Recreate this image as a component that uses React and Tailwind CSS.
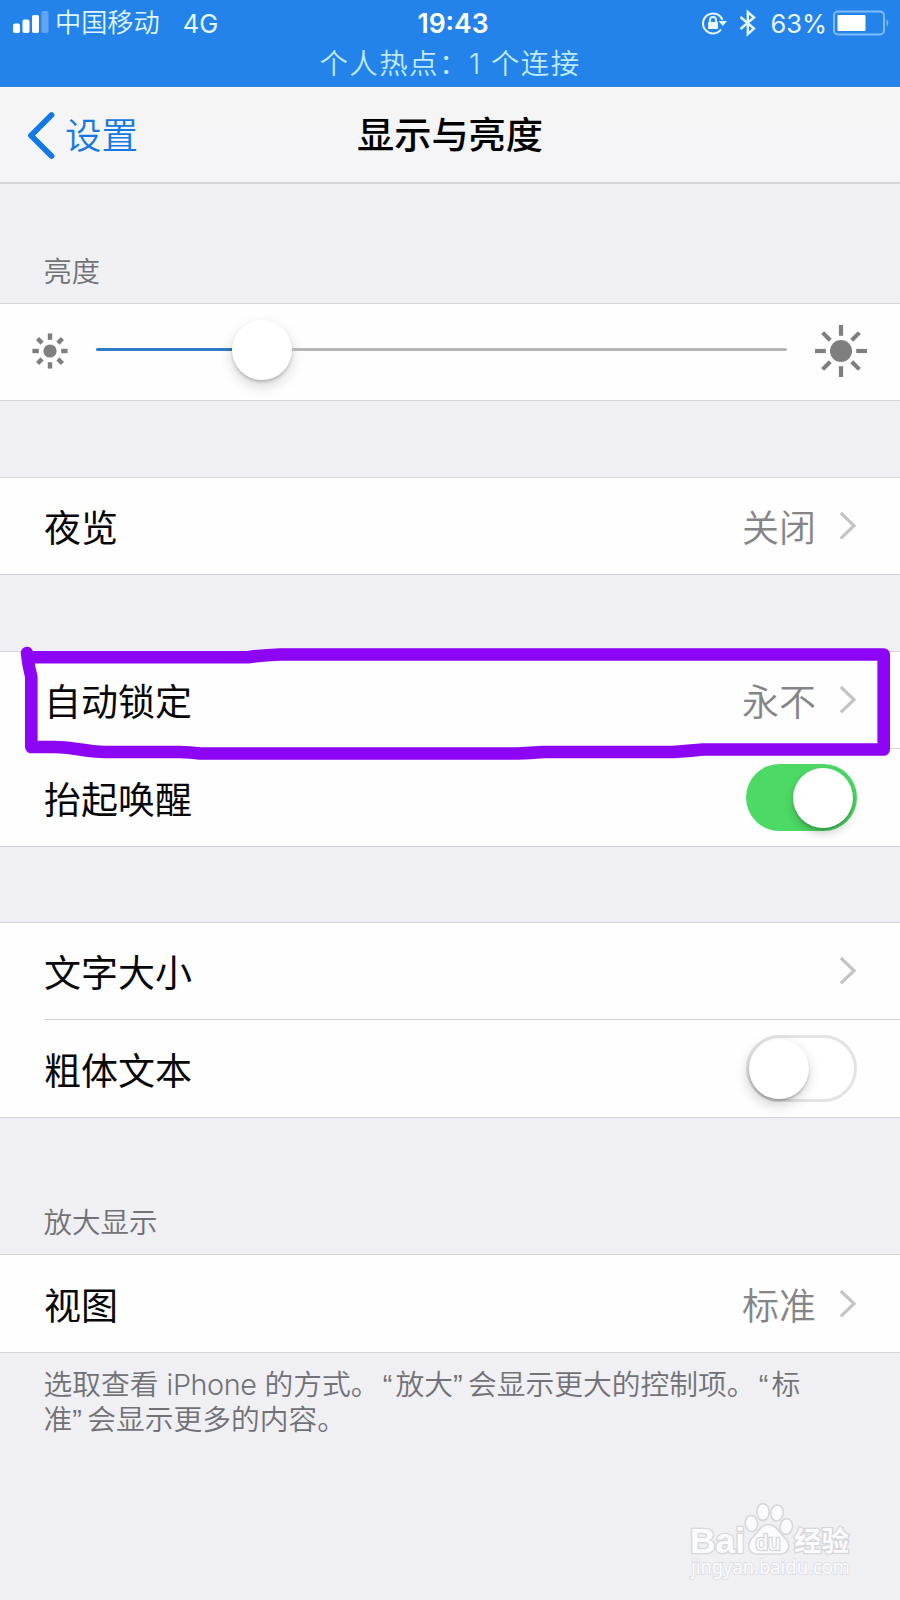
import React from "react";

const RAYS = [0, 45, 90, 135, 180, 225, 270, 315];

function Sun({ size, core, from, to, stroke, className }) {
  const c = size / 2;
  return (
    <svg width={size} height={size} viewBox={`${-c} ${-c} ${size} ${size}`} className={className}>
      <circle r={core} fill="#7f7f7f" />
      {RAYS.map((a) => (
        <line key={a} x1="0" y1={-from} x2="0" y2={-to} stroke="#7f7f7f" strokeWidth={stroke} transform={`rotate(${a})`} />
      ))}
    </svg>
  );
}

function Chevron() {
  return (
    <svg width="18" height="30" viewBox="0 0 18 30" className="ml-[23px] shrink-0">
      <path d="M1.8 2 L15 14.7 L1.8 27.4" fill="none" stroke="#c4c4c7" strokeWidth="3.2" />
    </svg>
  );
}

function Switch({ on }) {
  return on ? (
    <div className="flex h-[67px] w-[111px] items-center justify-end rounded-full bg-[#4cd964] pr-[4px]">
      <div className="size-[60px] rounded-full bg-white shadow-[0_5px_10px_rgba(0,0,0,0.2),0_2px_2px_rgba(0,0,0,0.15)]" />
    </div>
  ) : (
    <div className="flex h-[67px] w-[111px] items-center rounded-full border-[3px] border-[#e3e3e3] bg-white">
      <div className="size-[60px] rounded-full bg-white shadow-[-1px_5px_14px_rgba(0,0,0,0.2),0_2px_2px_rgba(0,0,0,0.2)]" />
    </div>
  );
}

function Row({ label, value, toggle, on, height }) {
  return (
    <div className={`flex items-center pl-[44px] pr-[43px] ${height}`}>
      <span className="flex-1 whitespace-nowrap pt-[5px] text-[37px] leading-none text-[#080808]">{label}</span>
      {toggle ? (
        <Switch on={on} />
      ) : (
        <>
          <span className="whitespace-nowrap pt-[5px] text-[37px] font-[350] leading-none text-[#858588]">{value}</span>
          <Chevron />
        </>
      )}
    </div>
  );
}

function Group({ children }) {
  return <section className="border-y border-[#d5d5d9] bg-[#fefefe]">{children}</section>;
}

function StatusBar() {
  return (
    <header className="h-[87px] border-b border-[#3b8ad8] bg-[#2483ea] text-white">
      <div className="flex h-[45px] items-center pl-[13px] pr-[10px]">
        <div className="flex flex-1 items-center">
          <svg width="36" height="24" viewBox="0 0 36 24">
            <rect x="0" y="13.5" width="7" height="9.5" rx="2" fill="#fff" />
            <rect x="9.5" y="9.5" width="7" height="13.5" rx="2" fill="#fff" />
            <rect x="19" y="5" width="7" height="18" rx="2" fill="#fff" />
            <rect x="28.5" y="1" width="7" height="22" rx="2" fill="#fff" opacity=".28" />
          </svg>
          <span className="ml-[6px] pt-[2px] text-[26.2px] font-[350] leading-none text-[#e0f6ff]">中国移动</span>
          <span className="ml-[23px] pt-[2px] text-[25.5px] leading-none text-[#e6f6ff]">4G</span>
        </div>
        <span className="pl-[3px] pt-[1px] text-[26.5px] font-semibold leading-none">19:43</span>
        <div className="flex flex-1 items-center justify-end">
          <svg width="26" height="26" viewBox="0 0 26 26" fill="none" stroke="#ecf8ff" strokeWidth="2">
            <path d="M20 19.5 A10 10 0 1 1 21.4 10" />
            <path d="M17.5 11 H26 L21.8 16 Z" fill="#ecf8ff" stroke="none" />
            <rect x="7" y="12" width="10" height="7" rx="1" fill="#ecf8ff" stroke="none" />
            <path d="M9 12.5 V10 A3 3 0 0 1 15 10 V12.5" strokeWidth="1.8" />
          </svg>
          <svg width="18" height="28" viewBox="0 0 18 28" className="ml-[12px]" fill="none" stroke="#e6f6ff" strokeWidth="2.4">
            <path d="M1.5 8 L15 19.5 L8.8 25 V3 L15 8.5 L1.5 20" />
          </svg>
          <span className="ml-[13px] pt-[2px] text-[25.5px] leading-none text-[#e6f6ff]">63%</span>
          <svg width="58" height="26" viewBox="0 0 58 26" className="-mr-[1px] ml-[6px]">
            <rect x="1" y="1.5" width="50" height="23" rx="4" fill="none" stroke="#7dbcf8" strokeWidth="2" />
            <rect x="4.5" y="5" width="28" height="16" rx="1" fill="#fff" />
            <path d="M53.5 9 Q57 13 53.5 17 Z" fill="#7dbcf8" />
          </svg>
        </div>
      </div>
      <div className="flex h-[39px] items-center justify-center whitespace-nowrap text-[28.5px] font-[350] leading-none tracking-[1.4px] text-[#bfeaff]">
        个人热点：1 个连接
      </div>
    </header>
  );
}

function NavBar() {
  return (
    <nav className="flex h-[97px] items-center border-b-2 border-[#d5d5dc] bg-linear-to-b from-[#f5f5f5] to-[#f5f5f9] pl-[27px] pr-[27px]">
      <div className="flex flex-1 items-center text-[#1479e2]">
        <svg width="30" height="48" viewBox="0 0 30 48">
          <path d="M24.5 4 L4 24.5 L24.5 45" fill="none" stroke="#1479e8" strokeWidth="5.8" strokeLinecap="round" strokeLinejoin="round" />
        </svg>
        <span className="ml-[8px] pt-[4px] text-[36.5px] font-[350] leading-none">设置</span>
      </div>
      <h1 className="pt-[3px] text-[37.2px] font-medium leading-none text-black">显示与亮度</h1>
      <div className="flex-1" />
    </nav>
  );
}

function Brightness() {
  return (
    <Group>
      <div className="flex h-[96px] items-center pb-[2px] pl-[32px] pr-[32px]">
        <Sun size={36} core={6.6} from={11.2} to={17.6} stroke={4.4} />
        <div className="ml-[28px] flex flex-1 items-center pb-[3px]">
          <div className="h-[3px] w-[136px] rounded-l-full bg-[#2c7cc8]" />
          <div className="size-[60px] rounded-full bg-white shadow-[0_6px_14px_rgba(0,0,0,0.16),0_2px_3px_rgba(0,0,0,0.18)]" />
          <div className="h-[3px] flex-1 rounded-r-full bg-[#b6b6b6]" />
        </div>
        <Sun size={54} core={11} from={15.2} to={26} stroke={4.2} className="ml-[27px]" />
      </div>
    </Group>
  );
}

function Marker() {
  return (
    <svg width="900" height="130" viewBox="0 640 900 130" className="pointer-events-none absolute left-0 top-[640px]">
      <path
        d="M27 653 Q28 664 31.3 677 V747 H55 C72 747 85 751.8 105 752 H180 Q190 752.2 200 753.5 H518 Q530 753 543 752 H673 Q688 751 703 749.5 H883.7 V654.5 H280 Q264 655 248 657.2 H30"
        fill="none"
        stroke="#8c05f5"
        strokeWidth="12.6"
        strokeLinecap="round"
        strokeLinejoin="round"
      />
    </svg>
  );
}

function Watermark() {
  return (
    <svg width="180" height="90" viewBox="0 0 180 90" className="absolute left-[680px] top-[1497px]">
      <g fill="#fbfbfd" stroke="#d6d6dc" strokeWidth="1.6">
        <g paintOrder="stroke" strokeWidth="2.6">
          <text x="10" y="56" fontFamily="Liberation Sans" fontWeight="700" fontSize="35" textLength="55" lengthAdjust="spacingAndGlyphs">Bai</text>
          <text x="114" y="54" fontFamily="Noto Sans CJK SC" fontWeight="700" fontSize="27.5" textLength="55" lengthAdjust="spacingAndGlyphs">经验</text>
        </g>
        <ellipse cx="71.5" cy="26.5" rx="6.2" ry="8" transform="rotate(-8 71.5 26.5)" />
        <ellipse cx="83" cy="15" rx="6.2" ry="8.4" />
        <ellipse cx="97" cy="16" rx="6.2" ry="8" transform="rotate(8 97 16)" />
        <ellipse cx="106.3" cy="29.5" rx="6.2" ry="7.8" transform="rotate(8 106.3 29.5)" />
        <path d="M88.5 27.5 C96 27.5 98 34 104 40 C112 47 109 57 100 57 H77 C68 57 66 47 73 40 C79 34 81 27.5 88.5 27.5 Z" />
        <text x="75.5" y="52.5" fontFamily="Liberation Sans" fontSize="22" strokeWidth="2.6" textLength="25" lengthAdjust="spacingAndGlyphs" paintOrder="stroke">du</text>
        <text x="11" y="76.5" fontFamily="Noto Sans" fontSize="20.5" strokeWidth="1.6" paintOrder="stroke" stroke="#dcdce2" textLength="159" lengthAdjust="spacingAndGlyphs">jingyan.baidu.com</text>
      </g>
    </svg>
  );
}

function OpenQuote() {
  return <span className="inline-block w-[16px] text-center font-['Liberation_Sans'] leading-none">“</span>;
}

function CloseQuote() {
  return <span className="inline-block w-[15px] text-left font-['Liberation_Sans'] leading-none">”</span>;
}

export default function App() {
  return (
    <div className="relative h-[1600px] w-[900px] overflow-hidden bg-[#efeff4] font-['Inter','Noto_Sans_CJK_SC',sans-serif]">
      <StatusBar />
      <NavBar />
      <h2 className="flex h-[119px] items-end pb-[17px] pl-[43.5px] text-[28.3px] font-[350] leading-none text-[#717176]">亮度</h2>
      <Brightness />
      <div className="h-[76px]" />
      <Group>
        <Row label="夜览" value="关闭" height="h-[96px]" />
      </Group>
      <div className="h-[76px]" />
      <Group>
        <Row label="自动锁定" value="永不" height="h-[96px]" />
        <div className="ml-[44px] h-px bg-[#d5d5d9]" />
        <Row label="抬起唤醒" toggle on height="h-[97px]" />
      </Group>
      <div className="h-[75px]" />
      <Group>
        <Row label="文字大小" value="" height="h-[96px]" />
        <div className="ml-[44px] h-px bg-[#d5d5d9]" />
        <Row label="粗体文本" toggle height="h-[97px]" />
      </Group>
      <h2 className="flex h-[136px] items-end pb-[17px] pl-[43.5px] text-[28.5px] font-[350] leading-none text-[#717176]">放大显示</h2>
      <Group>
        <Row label="视图" value="标准" height="h-[97px]" />
      </Group>
      <p className="whitespace-nowrap pl-[43.5px] pt-[14px] text-[28.75px] font-[350] leading-[35px] text-[#717176]">
        选取查看 <span className="tracking-[-0.4px]">iPhone</span> 的方式。<OpenQuote />放大<CloseQuote />会显示更大的控制项。<OpenQuote />标
        <br />
        准<CloseQuote />会显示更多的内容。
      </p>
      <Marker />
      <Watermark />
    </div>
  );
}
